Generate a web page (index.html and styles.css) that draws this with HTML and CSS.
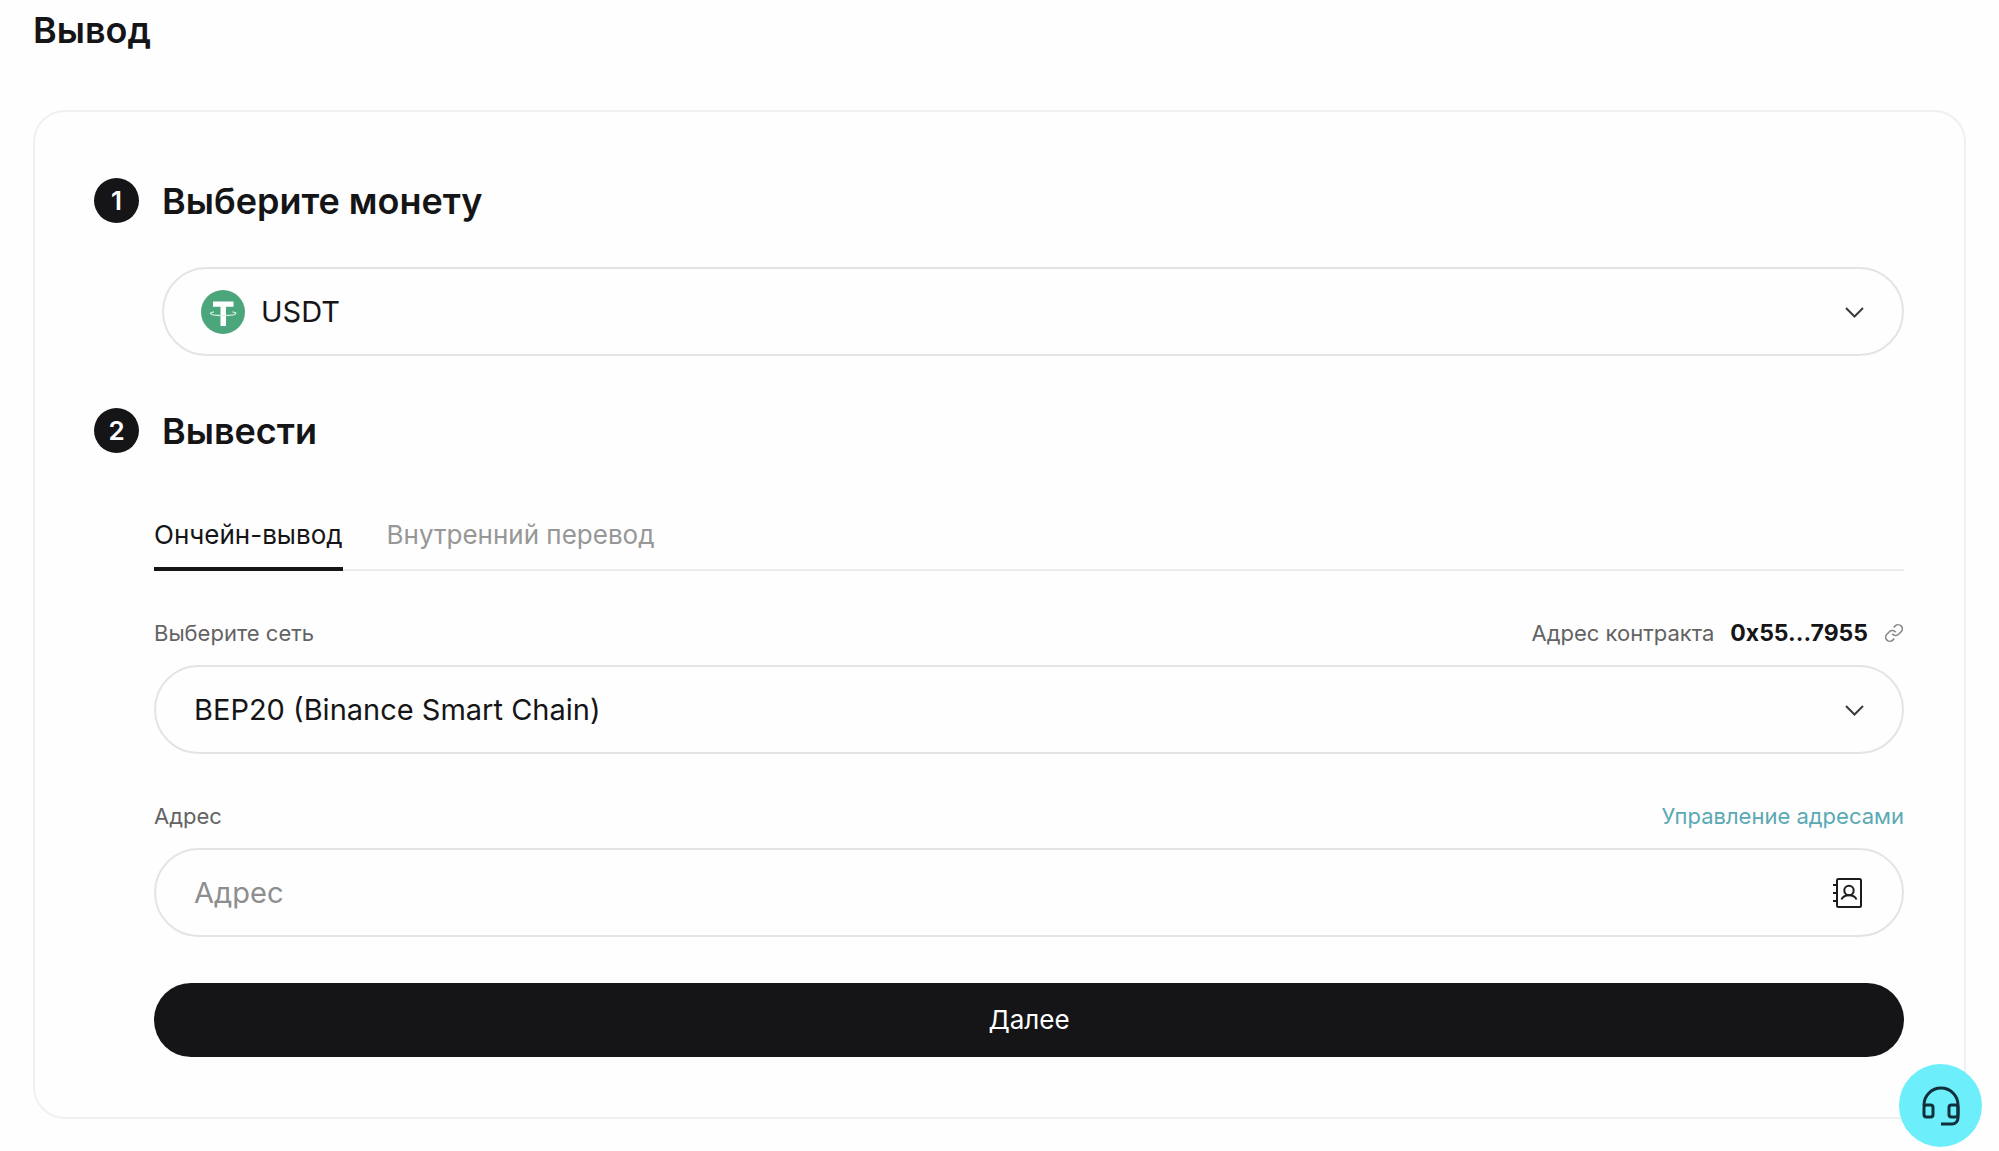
FILE: index.html
```html
<!DOCTYPE html>
<html lang="ru">
<head>
<meta charset="utf-8">
<meta name="viewport" content="width=device-width, initial-scale=1">
<title>Вывод</title>
<link rel="stylesheet" href="styles.css">
</head>
<body>
<main class="page">
  <h1 class="title">Вывод</h1>
  <form class="card">
    <section class="step">
      <div class="step-head">
        <span class="step-number">1</span>
        <h2 class="title"><label for="coin">Выберите монету</label></h2>
      </div>
      <div class="step-body step-body-coin">
        <div class="control">
          <select class="field field-coin" id="coin">
            <option>USDT</option>
          </select>
          <svg class="coin-icon" viewBox="0 0 44 44" aria-hidden="true">
            <circle cx="22" cy="22" r="22" fill="#4ba67b"/>
            <path d="M12 11.500h20.500v5.300h-7.500V36h-5.500V16.800H12z" fill="#fff"/>
            <path d="M13 21.800C10.500 22.200 9.500 22.700 9.500 23.300c0 1.400 5.600 2.300 12.700 2.300s12.700-.9 12.700-2.300c0-.6-1-1.100-3.500-1.500" fill="none" stroke="#d6f0e3" stroke-width="1.300"/>
          </svg>
          <svg class="chevron" viewBox="0 0 24 24" aria-hidden="true"><path d="M4 8l8.500 8.500L21 8"/></svg>
        </div>
      </div>
    </section>

    <section class="step">
      <div class="step-head">
        <span class="step-number">2</span>
        <h2 class="title">Вывести</h2>
      </div>
      <div class="step-body">
        <div class="tabs" role="tablist">
          <button class="tab tab-active" type="button" role="tab" aria-selected="true">Ончейн-вывод</button>
          <button class="tab" type="button" role="tab" aria-selected="false">Внутренний перевод</button>
        </div>

        <div class="group">
          <div class="group-head">
            <label for="network">Выберите сеть</label>
            <div class="contract">
              <span>Адрес контракта</span>
              <strong>0x55...7955</strong>
              <a class="contract-link" href="#contract" aria-label="Открыть контракт">
                <svg viewBox="0 0 24 24" aria-hidden="true"><path d="M10 13a5 5 0 0 0 7.540.540l3-3a5 5 0 0 0-7.070-7.070l-1.720 1.710"/><path d="M14 11a5 5 0 0 0-7.540-.540l-3 3a5 5 0 0 0 7.070 7.070l1.710-1.710"/></svg>
              </a>
            </div>
          </div>
          <div class="control">
            <select class="field" id="network">
              <option>BEP20 (Binance Smart Chain)</option>
            </select>
            <svg class="chevron" viewBox="0 0 24 24" aria-hidden="true"><path d="M4 8l8.500 8.500L21 8"/></svg>
          </div>
        </div>

        <div class="group">
          <div class="group-head">
            <label for="address">Адрес</label>
            <a class="manage" href="#addresses">Управление адресами</a>
          </div>
          <div class="control">
            <input class="field" id="address" type="text" placeholder="Адрес">
            <button class="book" type="button" aria-label="Адресная книга">
              <svg viewBox="0 0 32 32" aria-hidden="true">
                <rect x="6" y="2" width="24" height="28" rx="1.500"/>
                <path d="M2 8h4M2 16h4M2 24h4"/>
                <circle cx="18" cy="13.500" r="4.700"/>
                <path d="M10.500 22.500c1.200-3 4-4.300 7.500-4.300s6.300 1.300 7.500 4.300"/>
              </svg>
            </button>
          </div>
        </div>

        <button class="submit" type="submit">Далее</button>
      </div>
    </section>
  </form>
</main>

<button class="support" type="button" aria-label="Поддержка">
  <svg viewBox="0 0 42 42" aria-hidden="true">
    <path d="M4 21v-1a17 17 0 0 1 34 0v13a6 6 0 0 1-6 6H21"/>
    <rect x="4" y="20" width="9" height="12" rx="2.500"/>
    <rect x="29" y="20" width="9" height="12" rx="2.500"/>
  </svg>
</button>
</body>
</html>
```
FILE: styles.css
```css
* {
  box-sizing: border-box;
}

body {
  margin: 0;
  background: #fefefe;
  color: #151517;
  font-family: Inter, "Liberation Sans", sans-serif;
  font-size: 22px;
  line-height: 28px;
}

button,
input,
select {
  margin: 0;
  padding: 0;
  border: 0;
  background: none;
  color: inherit;
  font: inherit;
}

button {
  cursor: pointer;
}

svg {
  display: block;
}

.page {
  padding: 8px 33px 32px;
}

.title {
  margin: 0;
  font-size: 36px;
  font-weight: 600;
  line-height: 44px;
}

.card {
  display: flex;
  flex-direction: column;
  gap: 52px;
  margin-top: 58px;
  padding: 66px 60px 60px 59px;
  border: 2px solid #f0f0f0;
  border-radius: 32px;
}

.step-head {
  display: flex;
  align-items: center;
  gap: 23px;
}

.step-number {
  display: flex;
  align-items: center;
  justify-content: center;
  width: 45px;
  height: 45px;
  border-radius: 50%;
  background: #151517;
  color: #fff;
  font-size: 26px;
  font-weight: 600;
}

.step-body {
  padding: 66px 0 0 60px;
}

.step-body-coin {
  padding: 44px 0 0 68px;
}

.control {
  display: grid;
  align-items: center;
}

.control > * {
  grid-area: 1 / 1;
}

.field {
  width: 100%;
  height: 89px;
  padding: 0 80px 0 38px;
  border: 2px solid #e4e4e4;
  border-radius: 45px;
  appearance: none;
  font-size: 29px;
}

.field::placeholder {
  color: #8e8e8e;
  opacity: 1;
}

.field-coin {
  padding-left: 97px;
}

.coin-icon {
  width: 44px;
  height: 44px;
  margin-left: 39px;
  pointer-events: none;
}

.chevron {
  justify-self: end;
  width: 24px;
  height: 24px;
  margin-right: 38px;
  fill: none;
  stroke: #3c3c3e;
  stroke-width: 2;
  pointer-events: none;
}

.tabs {
  display: flex;
  gap: 44px;
  box-shadow: inset 0 -2px #ececec;
}

.tab {
  padding-bottom: 16px;
  border-bottom: 4px solid transparent;
  color: #979797;
  font-size: 26px;
  line-height: 32px;
}

.tab-active {
  border-color: #151517;
  color: #151517;
}

.group {
  margin-top: 48px;
}

.group-head {
  display: flex;
  justify-content: space-between;
  margin-bottom: 18px;
  color: #636363;
}

.contract {
  display: flex;
  align-items: center;
  gap: 16px;
}

.contract strong {
  color: #151517;
  font-size: 23px;
  font-weight: 700;
}

.contract-link svg {
  width: 20px;
  height: 20px;
  fill: none;
  stroke: #8a8a8a;
  stroke-width: 2;
}

.manage {
  color: #5aa9b4;
  text-decoration: none;
}

.book {
  justify-self: end;
  margin-right: 41px;
}

.book svg {
  width: 32px;
  height: 32px;
  fill: none;
  stroke: #1c1c1e;
  stroke-width: 2;
}

.submit {
  width: 100%;
  height: 74px;
  margin-top: 46px;
  border-radius: 37px;
  background: #151517;
  color: #fff;
  font-size: 26px;
}

.support {
  position: fixed;
  right: 17px;
  bottom: 4px;
  display: grid;
  place-items: center;
  width: 83px;
  height: 83px;
  border-radius: 50%;
  background: #6ceefb;
}

.support svg {
  width: 42px;
  height: 42px;
  fill: none;
  stroke: #10303a;
  stroke-width: 3;
}
```
